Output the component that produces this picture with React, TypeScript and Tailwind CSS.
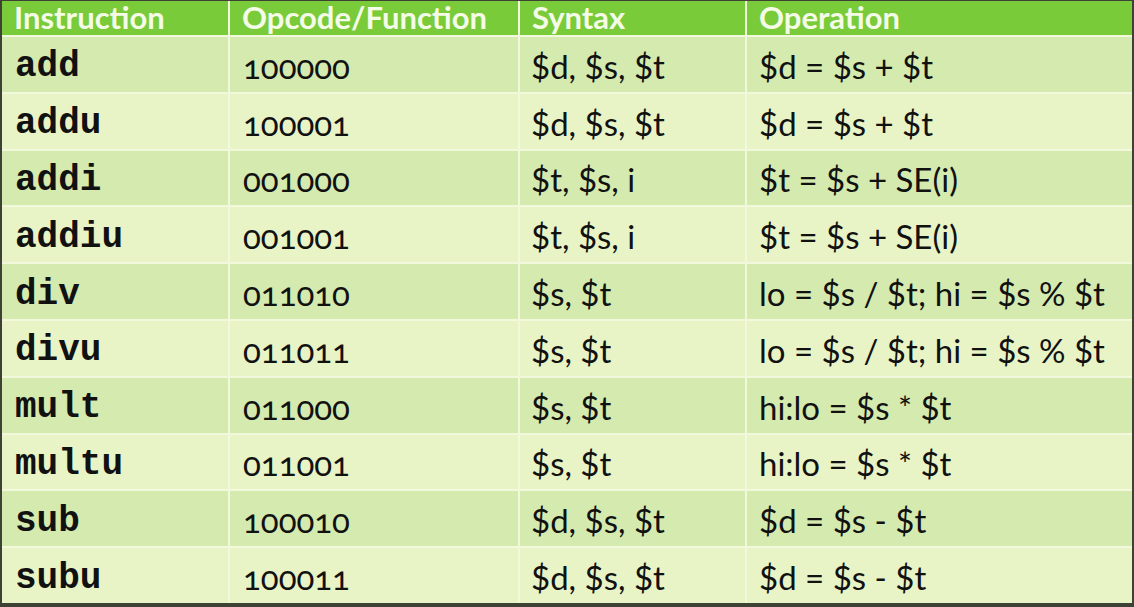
const rows = [
  ["add", "100000", "$d, $s, $t", "$d = $s + $t"],
  ["addu", "100001", "$d, $s, $t", "$d = $s + $t"],
  ["addi", "001000", "$t, $s, i", "$t = $s + SE(i)"],
  ["addiu", "001001", "$t, $s, i", "$t = $s + SE(i)"],
  ["div", "011010", "$s, $t", "lo = $s / $t; hi = $s % $t"],
  ["divu", "011011", "$s, $t", "lo = $s / $t; hi = $s % $t"],
  ["mult", "011000", "$s, $t", "hi:lo = $s * $t"],
  ["multu", "011001", "$s, $t", "hi:lo = $s * $t"],
  ["sub", "100010", "$d, $s, $t", "$d = $s - $t"],
  ["subu", "100011", "$d, $s, $t", "$d = $s - $t"],
]

const headers = ["Instruction", "Opcode/Function", "Syntax", "Operation"]

export default function App() {
  return (
    <div className="w-[1134px] h-[607px] bg-[#3d4234] pl-[2px] pr-[2px] pt-[1px] pb-[4px]">
      <div className="w-full h-full grid grid-cols-[226px_288px_225px_1fr] grid-rows-[34px_repeat(10,minmax(0,1fr))] gap-x-[2px] gap-y-[2px] bg-[#f2f8dc] font-['Lato',sans-serif]">
        {headers.map((h) => (
          <div key={h} className="bg-[#7acb3a] text-[#f4fbe6] font-bold text-[31px] leading-[32px] pl-[12px]">
            {h}
          </div>
        ))}
        {rows.map((r, i) => {
          const bg = i % 2 === 0 ? "bg-[#d4eaae]" : "bg-[#e8f4c6]"
          return (
            <div key={r[0]} className="contents">
              <div className={`${bg} flex items-center pl-[13px] pt-[6px] leading-[40px] font-['Liberation_Mono',monospace] font-bold text-[36px] text-[#111]`}>
                {r[0]}
              </div>
              <div className={`${bg} flex items-center pl-[13px] pt-[3px] leading-[40px] text-[33px] text-[#111] oldstyle-nums`}>
                {r[1]}
              </div>
              <div className={`${bg} flex items-center pl-[11px] pt-[3px] leading-[40px] text-[33px] text-[#111]`}>
                {r[2]}
              </div>
              <div className={`${bg} flex items-center pl-[12px] pt-[3px] leading-[40px] text-[33px] text-[#111]`}>
                {r[3]}
              </div>
            </div>
          )
        })}
      </div>
    </div>
  )
}
